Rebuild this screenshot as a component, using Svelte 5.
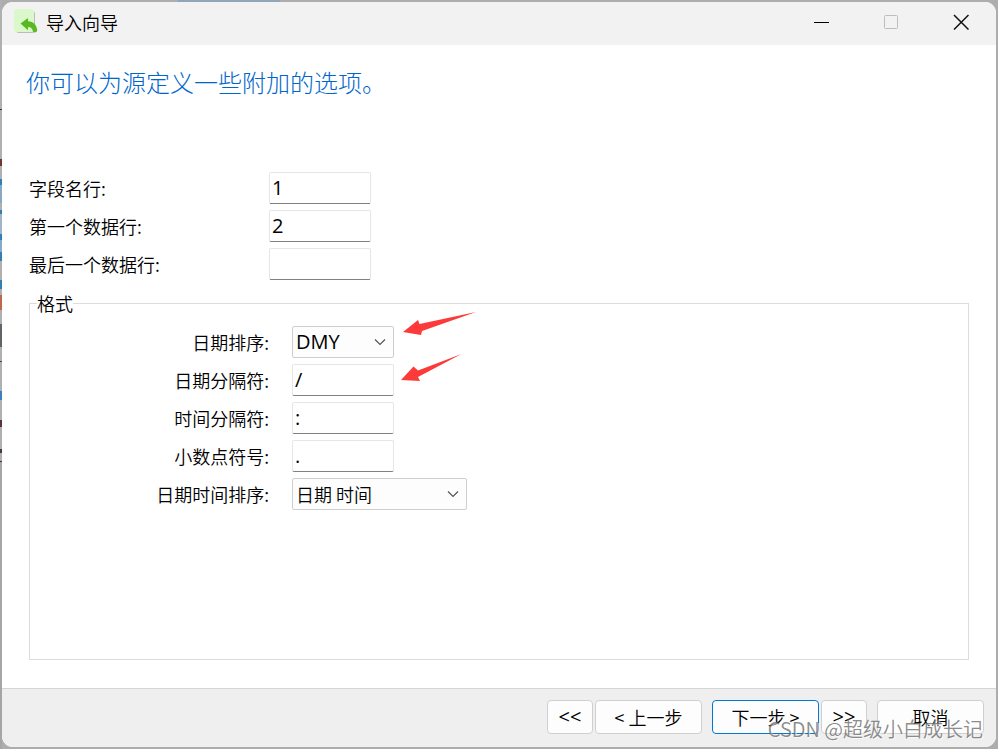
<script lang="ts">
  let headerRow = $state('1');
  let firstRow = $state('2');
  let lastRow = $state('');
  let dateOrder = $state('DMY');
  let dateDelimiter = $state('/');
  let timeDelimiter = $state(':');
  let decimalSymbol = $state('.');
  let dateTimeOrder = $state('dt');
</script>

<div class="backdrop">
  <div class="window">
    <header class="titlebar">
      <svg class="app-icon" width="26" height="26" viewBox="0 0 26 26" aria-hidden="true">
        <rect x="3" y="2" width="19" height="22" rx="3" fill="#b9bcb7" />
        <rect x="1" y="0" width="20" height="23" rx="3" fill="#daf8ca" />
        <path d="M7.500 14.500 15 9v3.200c5.500.2 8.600 3.600 9.200 8.800.2 2.600-3.800 3.400-4.400.8-.6-2.400-2-3.700-4.800-3.800v3.200z" fill="#58b924" />
      </svg>
      <h1>导入向导</h1>
      <div class="caption-buttons">
        <button aria-label="最小化">
          <svg width="16" height="16" viewBox="0 0 16 16"><path d="M1 8.500h15" stroke="#000" /></svg>
        </button>
        <button aria-label="最大化" disabled>
          <svg width="16" height="16" viewBox="0 0 16 16"><rect x="1.500" y="1.500" width="13" height="13" rx="1" fill="none" stroke="#bdbdbd" /></svg>
        </button>
        <button aria-label="关闭">
          <svg width="16" height="16" viewBox="0 0 16 16"><path d="M1 1l14.500 14.500M15.500 1L1 15.500" stroke="#111" stroke-width="1.500" /></svg>
        </button>
      </div>
    </header>

    <main>
      <h2>你可以为源定义一些附加的选项。</h2>

      <div class="rows">
        <label for="header-row">字段名行:</label>
        <input id="header-row" type="text" bind:value={headerRow} />
        <label for="first-row">第一个数据行:</label>
        <input id="first-row" type="text" bind:value={firstRow} />
        <label for="last-row">最后一个数据行:</label>
        <input id="last-row" type="text" bind:value={lastRow} />
      </div>

      <fieldset>
        <legend>格式</legend>
        <div class="rows format">
          <label for="date-order">日期排序:</label>
          <div class="select">
            <select id="date-order" class="latin" bind:value={dateOrder}>
              <option>DMY</option>
              <option>MDY</option>
              <option>YMD</option>
            </select>
            <svg class="chevron" width="12" height="8" viewBox="0 0 12 8"><path d="M1 1.500l5 5 5-5" /></svg>
          </div>
          <label for="date-delimiter">日期分隔符:</label>
          <input id="date-delimiter" type="text" bind:value={dateDelimiter} />
          <label for="time-delimiter">时间分隔符:</label>
          <input id="time-delimiter" type="text" bind:value={timeDelimiter} />
          <label for="decimal-symbol">小数点符号:</label>
          <input id="decimal-symbol" type="text" bind:value={decimalSymbol} />
          <label for="datetime-order">日期时间排序:</label>
          <div class="select wide">
            <select id="datetime-order" bind:value={dateTimeOrder}>
              <option value="dt">日期 时间</option>
              <option value="td">时间 日期</option>
            </select>
            <svg class="chevron" width="12" height="8" viewBox="0 0 12 8"><path d="M1 1.500l5 5 5-5" /></svg>
          </div>

          <svg class="arrows" width="80" height="76" viewBox="0 0 80 76" aria-hidden="true">
            <path d="M3 22 18 10l1.500 4L76 2 22 21l-1 4z" />
            <path d="M1 70 13.500 56.500l4.500 4L61.500 44 18 67l2 4z" />
          </svg>
        </div>
      </fieldset>
    </main>

    <footer>
      <button class="small latin">&lt;&lt;</button>
      <button>&lt; 上一步</button>
      <button class="primary">下一步 &gt;</button>
      <button class="small latin">&gt;&gt;</button>
      <button class="cancel">取消</button>
    </footer>
    <span class="watermark">CSDN @超级小白成长记</span>
  </div>
</div>

<style>
  :global(body) {
    margin: 0;
  }

  .backdrop {
    --cjk: "Noto Sans CJK SC", sans-serif;
    --latin: "Open Sans", "Noto Sans CJK SC", sans-serif;
    box-sizing: border-box;
    display: flex;
    min-height: 100vh;
    padding: 2px;
    font: 350 18px/24px var(--cjk);
    color: #000;
    background:
      linear-gradient(90deg, transparent 178px, #93a5b8 178px 280px, transparent 280px) 0 0 / 100% 2px no-repeat,
      linear-gradient(
        #b0b0b0 109px, #333 109px 110px, #b0b0b0 110px 159px, #6d3a2a 159px 166px,
        #b0b0b0 166px 179px, #347eb2 179px 185px, #86a9c8 185px 203px, #b0b0b0 203px 210px,
        #347eb2 210px 214px, #a3b4c7 214px 234px, #347eb2 234px 240px, #86a9c8 240px 252px,
        #347eb2 252px 261px, #b0b0b0 261px 280px, #347eb2 280px 289px, #b0b0b0 289px 295px,
        #bb6852 295px 310px, #b0b0b0 310px 324px, #5f6469 324px 347px, #b0b0b0 347px 361px,
        #5c4630 361px 362px, #b0b0b0 362px 391px, #3d7fb8 391px 400px, #b0b0b0 400px 420px,
        #5a3438 420px 427px, #b0b0b0 427px 449px, #4c3a3a 449px 453px, #b0b0b0 453px 461px,
        #333 461px 462px, #a6a6a6 462px
      ) 0 0 / 2px 100% no-repeat,
      #adadad;
  }

  .window {
    position: relative;
    flex: 1;
    display: flex;
    flex-direction: column;
    overflow: hidden;
    border-radius: 11px;
    background: #fff;
  }

  .titlebar {
    display: flex;
    align-items: center;
    height: 40px;
    padding: 0 0 3px 11px;
    background: #f2f2f2;
  }

  h1 {
    margin: 0 auto 0 7px;
    font: inherit;
  }

  .caption-buttons {
    display: flex;
  }

  .caption-buttons button {
    display: flex;
    align-items: center;
    justify-content: center;
    width: 70px;
    height: 40px;
    padding: 0;
    border: 0;
    background: none;
  }

  main {
    flex: 1;
    display: flex;
    flex-direction: column;
    padding: 19px 27px 28px;
  }

  h2 {
    margin: 0 0 72px -3px;
    font: 300 24px/36px var(--cjk);
    color: #0066cc;
  }

  .rows {
    display: grid;
    grid-template-columns: 240px 1fr;
    gap: 6px 0;
    align-items: center;
    justify-items: start;
  }

  .format {
    position: relative;
    grid-template-columns: 239px 1fr;
    column-gap: 23px;
    padding-top: 11px;
  }

  .format label {
    justify-self: end;
  }

  input,
  select {
    box-sizing: border-box;
    width: 102px;
    height: 32px;
    margin: 0;
    padding: 0 2px 2px;
    border: 1px solid #e6e6e6;
    border-bottom-color: #808080;
    border-radius: 2px;
    background: #fff;
    font: 20px/28px var(--latin);
    color: #000;
  }

  .select {
    position: relative;
    display: flex;
  }

  select {
    appearance: none;
    padding: 0 3px;
    border-color: #cfcfcf;
    background: #fdfdfd;
    font: 350 18px/28px var(--cjk);
  }

  .wide select {
    width: 175px;
  }

  .chevron {
    position: absolute;
    top: 12px;
    right: 8px;
    fill: none;
    stroke: #555;
    stroke-width: 1.2;
    pointer-events: none;
  }

  fieldset {
    flex: 1;
    min-width: 0;
    margin: 11px 0 0;
    padding: 0;
    border: 1px solid #dcdcdc;
  }

  legend {
    margin-left: 7px;
    padding: 0;
  }

  .arrows {
    position: absolute;
    top: -5px;
    left: 370px;
    fill: #fc3a39;
    pointer-events: none;
  }

  footer {
    display: flex;
    justify-content: flex-end;
    gap: 2px;
    padding: 11px 12px 13px;
    border-top: 1px solid #d5d5d5;
    background: #efefef;
  }

  footer button {
    box-sizing: border-box;
    width: 107px;
    height: 34px;
    padding: 0;
    border: 1px solid #d0d0d0;
    border-radius: 4px;
    background: #fdfdfd;
    font: 350 18px/24px var(--cjk);
    color: #000;
  }

  footer .small {
    width: 46px;
  }

  .primary {
    margin-left: 8px;
    border-color: #0078d4;
  }

  .cancel {
    margin-left: 8px;
  }

  select.latin,
  button.latin {
    font: 20px/28px var(--latin);
  }

  .watermark {
    position: absolute;
    right: 13px;
    bottom: 6px;
    font: 350 20px/24px var(--cjk);
    color: rgba(110, 110, 110, 0.8);
    text-shadow: 1px 1px 0 rgba(255, 255, 255, 0.6);
    pointer-events: none;
  }
</style>
